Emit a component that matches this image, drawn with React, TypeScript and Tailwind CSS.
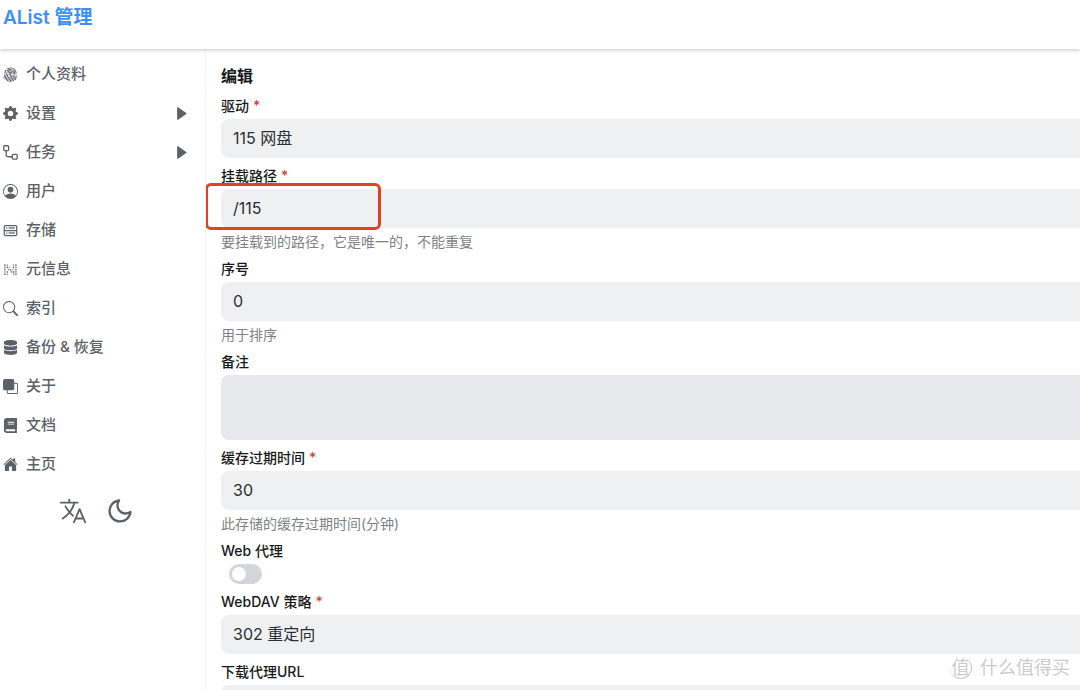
import { useState } from "react";
import type { ComponentType, ReactNode } from "react";
import { BsFingerprint, BsFront, BsGearFill, BsPersonCircle, BsSearch } from "react-icons/bs";
import { CgDatabase } from "react-icons/cg";
import { FaBook, FaDatabase } from "react-icons/fa";
import { FiMoon } from "react-icons/fi";
import { IoHome, IoLanguageOutline } from "react-icons/io5";
import { BiSolidRightArrow } from "react-icons/bi";

interface NavItem {
  title: string;
  icon: ComponentType<{ className?: string }>;
  expandable?: boolean;
}

function WorkflowIcon({ className }: { className?: string }) {
  return (
    <svg viewBox="0 0 16 16" fill="none" stroke="currentColor" strokeWidth="1.4" className={className}>
      <rect x="0.8" y="0.8" width="5.2" height="5.2" rx="1" />
      <rect x="9.9" y="9.9" width="5.2" height="5.2" rx="1" />
      <path d="M3.4 6v4.5a2 2 0 0 0 2 2h4.5" />
    </svg>
  );
}

// [x, y, opacity] for each dot of the meta icon
const metaDots = [
  [2, 3.4, 0.9], [4.6, 3.4, 0.6], [11.2, 3.4, 0.6], [13.8, 3.4, 0.9],
  [2, 5.8, 0.7], [4.6, 5.8, 0.9], [6.8, 5.8, 0.5], [11.2, 5.8, 0.9], [13.8, 5.8, 0.6],
  [2, 8.2, 0.8], [6.2, 8, 0.8], [8.2, 8.6, 0.8], [10.6, 8, 0.5], [13.8, 8.2, 0.9],
  [2, 10.6, 0.6], [4.6, 10.6, 0.8], [9.2, 10.6, 0.8], [11.4, 10.6, 0.9], [13.8, 10.6, 0.7],
  [2, 13, 0.9], [4.6, 13, 0.6], [11.2, 13, 0.6], [13.8, 13, 0.9],
];

function MetaIcon({ className }: { className?: string }) {
  return (
    <svg viewBox="0 0 16 16" fill="currentColor" className={className}>
      {metaDots.map(([x, y, opacity]) => (
        <circle key={`${x}-${y}`} cx={x} cy={y} r="0.9" opacity={opacity} />
      ))}
    </svg>
  );
}

const navItems: NavItem[] = [
  { title: "个人资料", icon: BsFingerprint },
  { title: "设置", icon: BsGearFill, expandable: true },
  { title: "任务", icon: WorkflowIcon, expandable: true },
  { title: "用户", icon: BsPersonCircle },
  { title: "存储", icon: CgDatabase },
  { title: "元信息", icon: MetaIcon },
  { title: "索引", icon: BsSearch },
  { title: "备份 & 恢复", icon: FaDatabase },
  { title: "关于", icon: BsFront },
  { title: "文档", icon: FaBook },
  { title: "主页", icon: IoHome },
];

const control =
  "block h-[39px] w-full appearance-none rounded-l-lg bg-[#eff0f2] px-3 pb-0.5 text-base text-[#2b2f33] outline-none";

function Header() {
  return (
    <header className="relative z-10 flex h-[49px] shrink-0 items-start bg-white px-[3px] pt-1 shadow-[0_1px_4px_rgba(0,0,0,0.22)]">
      <a href="#" className="text-[19px] leading-7 font-semibold text-[#3d8ffc]">
        AList 管理
      </a>
    </header>
  );
}

function SideMenu() {
  return (
    <aside className="w-[206px] shrink-0 border-r border-[#f3f3f4] pt-1.5 text-[#5b6168]">
      <nav className="w-48">
        {navItems.map(({ title, icon: Icon, expandable }) => (
          <a key={title} href="#" className="flex h-[39px] items-center gap-2 px-[3px]">
            <Icon className="size-[15px] shrink-0" />
            <span className="grow text-[15px] font-medium">{title}</span>
            {expandable && <BiSolidRightArrow className="size-[15px]" />}
          </a>
        ))}
      </nav>
      <div className="flex w-48 items-center justify-center gap-[18px] pt-3">
        <button type="button" aria-label="语言">
          <IoLanguageOutline className="size-[30px]" />
        </button>
        <button type="button" aria-label="深色模式">
          <FiMoon className="size-7" />
        </button>
      </div>
    </aside>
  );
}

interface FieldProps {
  id: string;
  label: string;
  required?: boolean;
  help?: string;
  children: ReactNode;
}

function Field({ id, label, required, help, children }: FieldProps) {
  return (
    <div className="flex flex-col gap-1">
      <label htmlFor={id} className="text-sm leading-[19px] font-medium text-[#17191c]">
        {label}
        {required && <span className="ml-1 text-[#d0453a]">*</span>}
      </label>
      {children}
      {help && <p className="text-sm leading-[19px] text-[#7d8288]">{help}</p>}
    </div>
  );
}

function Watermark() {
  return (
    <div className="pointer-events-none absolute right-2.5 bottom-2 z-20 flex items-center gap-2 text-[#cbcbcd] [text-shadow:-1px_-1px_0_#fff]">
      <span className="flex size-[22px] items-center justify-center rounded-full border-r border-b border-[#c8c8ca] text-lg leading-none">
        值
      </span>
      <span className="text-lg leading-7">什么值得买</span>
    </div>
  );
}

export default function App() {
  const [webProxy, setWebProxy] = useState(false);

  return (
    <div className="relative flex h-screen flex-col overflow-hidden bg-white font-['Inter','Noto_Sans_CJK_SC',sans-serif]">
      <Header />
      <div className="flex min-h-0 grow">
        <SideMenu />
        <main className="min-w-0 grow overflow-hidden pt-[15px] pl-[15px]">
          <form className="flex flex-col gap-2">
            <h2 className="text-base leading-6 font-bold text-[#17191c]">编辑</h2>
            <Field id="driver" label="驱动" required>
              <select id="driver" className={control}>
                <option>115 网盘</option>
              </select>
            </Field>
            <Field id="mount_path" label="挂载路径" required help="要挂载到的路径，它是唯一的，不能重复">
              <div className="relative">
                <input id="mount_path" defaultValue="/115" className={control} />
                <span className="pointer-events-none absolute -top-1.5 -left-4 h-[47px] w-44 rounded-md border-3 border-[#e2421f]" />
              </div>
            </Field>
            <Field id="order" label="序号" help="用于排序">
              <input id="order" inputMode="numeric" defaultValue="0" className={control} />
            </Field>
            <Field id="remark" label="备注">
              <textarea
                id="remark"
                className="block h-[65px] w-full resize-none rounded-l-lg bg-[#e8e9ed] px-3 py-2 text-base text-[#2b2f33] outline-none"
              />
            </Field>
            <Field id="cache_expiration" label="缓存过期时间" required help="此存储的缓存过期时间(分钟)">
              <input id="cache_expiration" inputMode="numeric" defaultValue="30" className={control} />
            </Field>
            <Field id="web_proxy" label="Web 代理">
              <input
                id="web_proxy"
                type="checkbox"
                role="switch"
                checked={webProxy}
                onChange={(e) => setWebProxy(e.target.checked)}
                className="ml-2 flex h-5 w-[33px] appearance-none items-center rounded-full bg-[#d2d5d9] px-[3px] before:size-3.5 before:rounded-full before:bg-white checked:justify-end checked:bg-[#3d8ffc]"
              />
            </Field>
            <Field id="webdav_policy" label="WebDAV 策略" required>
              <select id="webdav_policy" className={control}>
                <option>302 重定向</option>
              </select>
            </Field>
            <Field id="down_proxy_url" label="下载代理URL">
              <input id="down_proxy_url" className={control} />
            </Field>
          </form>
        </main>
      </div>
      <Watermark />
    </div>
  );
}
